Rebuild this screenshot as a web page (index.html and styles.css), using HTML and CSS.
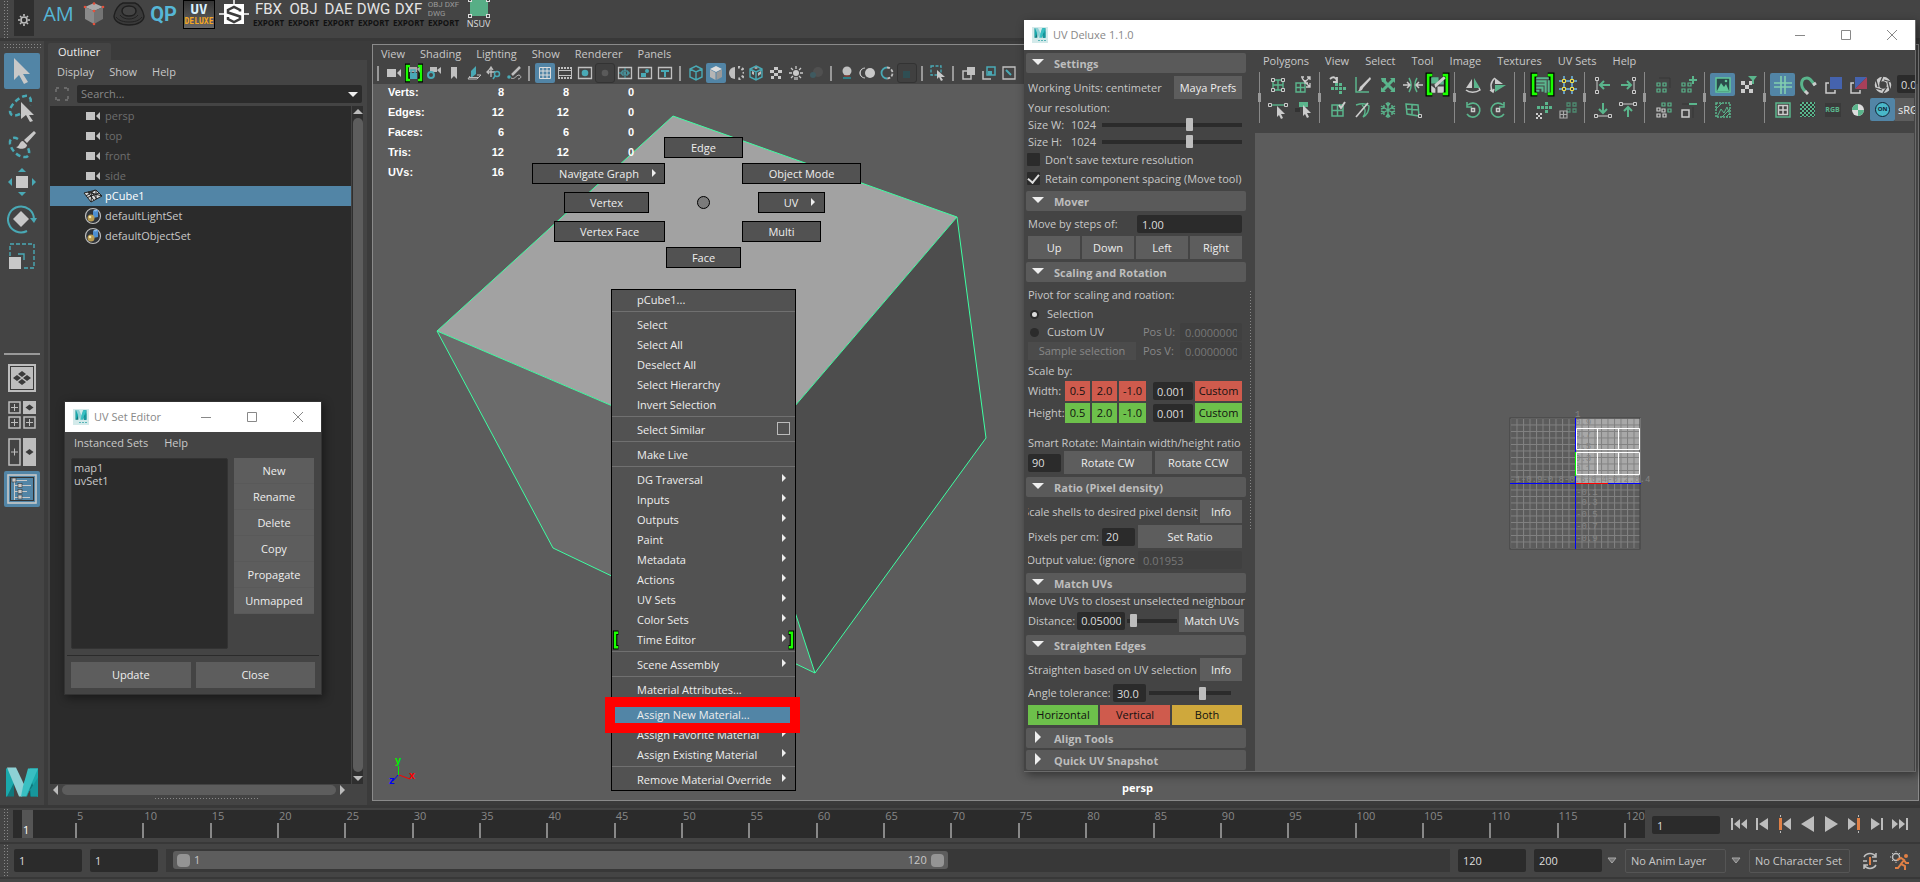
FILE: index.html
```html
<!DOCTYPE html>
<html lang="en">
<head>
<meta charset="utf-8">
<title>Maya - UV Deluxe</title>
<link rel="stylesheet" href="styles.css">
</head>
<body>
<svg class="defs" aria-hidden="true">
  <symbol id="camera" viewBox="0 0 16 12"><path fill="#c4c4c4" d="M1 2h9v8H1zM11 6l4-4v8z"/></symbol>
  <symbol id="set" viewBox="0 0 18 18"><circle cx="9" cy="9" r="7.5" fill="#30343a" stroke="#bdbdbd" stroke-width="1.2"/><path fill="#4d8fd0" d="M9 4l5-1v7l-5 1z"/><path fill="#8cbcea" d="M9 4l2-1.500 3 .5-2 1.500z"/><circle cx="7" cy="11" r="3.500" fill="#b89b50"/><circle cx="6" cy="10" r="1.300" fill="#efe2b0"/></symbol>
  <symbol id="maya" viewBox="0 0 32 30"><path fill="#10777c" d="M0 1h8v28H0zM24 1h8v28h-8z"/><path fill="#1aa9ac" d="M0 1l8 0 0 14L1 29H0zM32 1h-8L16 20l4 9h1l5-14 5 14h1z"/><path fill="#8ed1d5" d="M1 0h9l10 21-4 8h-3z"/><path fill="#17979c" d="M20 29L32 10V29h-7l-1-9z"/><path fill="#39bfc2" d="M22 1h10L20 29h-5l2-10z"/></symbol>
  <symbol id="tri" viewBox="0 0 12 6"><path fill="#eee" d="M0 0h12L6 6z"/></symbol>
  <symbol id="brL" viewBox="0 0 7 22"><path fill="none" stroke="#000" stroke-width="5" d="M7 3H3v16h4"/><path fill="none" stroke="#1bff00" stroke-width="2.600" d="M6.500 3H3v16h3.500"/></symbol>
  <symbol id="cubeo" viewBox="0 0 16 16"><path fill="none" stroke="#49a9b5" stroke-width="1.400" d="M8 1l6 3v8l-6 3-6-3V4zM2 4l6 3 6-3M8 7v8"/></symbol>
  <symbol id="first" viewBox="0 0 18 14"><path fill="#bdbdbd" d="M1 1h2v12H1zM10 2v10L4 7zM17 2v10l-6-5z"/></symbol>
  <symbol id="stepb" viewBox="0 0 14 14"><path fill="#bdbdbd" d="M1 1h2v12H1zM13 1v12L4 7z"/></symbol>
  <symbol id="keyb" viewBox="0 0 14 18"><path fill="#e08046" d="M1 3h3v12H1z"/><path fill="#bdbdbd" d="M13 3v12L5 9zM2 0h1v2H2zM2 16h1v2H2z"/></symbol>
  <symbol id="play" viewBox="0 0 14 16"><path fill="#bdbdbd" d="M1 0l13 8-13 8z"/></symbol>
</svg>

<header class="shelf">
  <div class="grip grip-v"></div>
  <button class="gear" aria-label="Shelf settings"><svg width="12" height="12" viewBox="0 0 12 12"><circle cx="6" cy="6" r="3" fill="none" stroke="#c0c0c0" stroke-width="1.600"/><path stroke="#c0c0c0" stroke-width="1.600" d="M6 0v2M6 10v2M0 6h2M10 6h2M2 2l1.300 1.300M8.700 8.700L10 10M10 2L8.700 3.300M3.300 8.700L2 10"/></svg></button>
  <nav class="shelf-items">
    <button class="cy">AM</button>
    <button aria-label="Cube"><svg width="22" height="24" viewBox="0 0 22 24"><path fill="#aaa" d="M11 1l9 4-9 4-9-4z"/><path fill="#8a8a8a" d="M2 5l9 4v13l-9-5z"/><path fill="#747474" d="M20 5l-9 4v13l9-5z"/><g fill="#e5503a"><circle cx="11" cy="1.500" r="1.300"/><circle cx="2" cy="5" r="1.300"/><circle cx="20" cy="5" r="1.300"/><circle cx="11" cy="9" r="1.300"/><circle cx="11" cy="22" r="1.300"/></g></svg></button>
    <button aria-label="Torus"><svg width="32" height="24" viewBox="0 0 32 24"><path fill="#3a3a3a" stroke="#1f1f1f" stroke-width="1.400" d="M1 14C2 8 6 2 10 1h12c4 1 8 7 9 13 0 5-6 9-15 9S1 19 1 14z"/><path fill="#444" stroke="#1f1f1f" stroke-width="1.500" d="M9 9c0-3 3-5 7-5s7 2 7 5-3 5-7 5-7-2-7-5z"/><path fill="none" stroke="#222" d="M3 15c3 4 8 5 13 5s10-1 13-5M7 13c2 3 6 4 9 4s7-1 9-4"/></svg></button>
    <button class="cy qp">QP</button>
    <button class="deluxe"><b>UV</b><i>DELUXE</i></button>
    <button aria-label="Substance"><svg width="30" height="30" viewBox="0 0 30 30"><path stroke="#fff" stroke-width="1.500" d="M0 15h30M15 0v5"/><rect x="5" y="5" width="20" height="20" fill="#fff"/><path fill="none" stroke="#3d3d3d" stroke-width="2.500" d="M21 12.500V11l-6-3-6 3v2.500l12 4V20l-6 3-6-3v-2"/></svg></button>
    <button class="exp"><b>FBX</b><i>EXPORT</i></button>
    <button class="exp"><b>OBJ</b><i>EXPORT</i></button>
    <button class="exp"><b>DAE</b><i>EXPORT</i></button>
    <button class="exp"><b>DWG</b><i>EXPORT</i></button>
    <button class="exp"><b>DXF</b><i>EXPORT</i></button>
    <button class="exp multi"><b>OBJ DXF<br>DWG</b><i>EXPORT</i></button>
    <button class="nsuv"><svg width="22" height="19" viewBox="0 0 22 19"><rect x="2" y="0" width="18" height="16" fill="#57ae86"/><g fill="#444" stroke="#ddd"><rect x=".5" y="14.500" width="3" height="3"/><rect x="18.500" y="14.500" width="3" height="3"/><rect x=".5" y="-1.500" width="3" height="3"/><rect x="18.500" y="-1.500" width="3" height="3"/></g></svg><span>NSUV</span></button>
  </nav>
</header>

<main class="main">
  <aside class="toolbox">
    <div class="grip grip-h"></div>
    <button class="tool on" aria-label="Select"><svg width="20" height="28" viewBox="0 0 20 28"><path fill="#c8c8c8" d="M2 1l16 16h-7l5 8-4 2-5-9-5 5z"/></svg></button>
    <button class="tool" aria-label="Lasso"><svg width="28" height="30" viewBox="0 0 28 30"><path fill="none" stroke="#49a9b5" stroke-width="2.500" stroke-dasharray="5 3" d="M12 21C5 24 2 22 2 18 2 12 11 4 17 3c5-1 7 3 5 9"/><path fill="#c8c8c8" d="M13 9l13 13h-5l4 6-3 1-4-7-5 4z"/></svg></button>
    <button class="tool" aria-label="Paint select"><svg width="28" height="30" viewBox="0 0 28 30"><path fill="none" stroke="#49a9b5" stroke-width="2.500" stroke-dasharray="5 3" d="M10 9C5 6 1 9 2 14c2 8 10 14 16 13 4-1 4-6 1-11"/><path fill="#c8c8c8" d="M26 1l2 2-9 10-3-3zM15 11l4 4c0 4-7 5-11 2 4 0 3-6 7-6z"/></svg></button>
    <button class="tool" aria-label="Move"><svg width="28" height="28" viewBox="0 0 28 28"><rect x="8" y="8" width="12" height="12" fill="#c8c8c8"/><path fill="#49a9b5" d="M14 0l4 4h-8zM14 28l4-4h-8zM0 14l4-4v8zM28 14l-4-4v8z"/></svg></button>
    <button class="tool" aria-label="Rotate"><svg width="30" height="30" viewBox="0 0 30 30"><path fill="none" stroke="#49a9b5" stroke-width="2" d="M20 27A13 13 0 1 1 27 15"/><path fill="#49a9b5" d="M23 14h7l-3 5z"/><path fill="#c8c8c8" d="M14 7l8 8-8 8-8-8z"/></svg></button>
    <button class="tool" aria-label="Scale"><svg width="26" height="26" viewBox="0 0 26 26"><path fill="none" stroke="#49a9b5" stroke-width="1.400" stroke-dasharray="4 2" d="M1 13V1h24v24H13"/><path fill="none" stroke="#49a9b5" stroke-width="1.400" d="M9 11h6v6"/><rect y="14" width="12" height="12" fill="#c8c8c8"/></svg></button>
    <hr>
    <div class="layouts">
      <button aria-label="Single pane"><svg width="28" height="28" viewBox="0 0 28 28"><rect width="28" height="28" fill="#bdbdbd"/><rect x="2.500" y="2.500" width="23" height="23" fill="none" stroke="#3a3a3a"/><g fill="#3a3a3a"><path d="M14 7l4 3-4 3-4-3zM14 15l4 3-4 3-4-3zM9 11l4 3-4 3-4-3zM19 11l4 3-4 3-4-3z"/></g></svg></button>
      <button aria-label="Four panes"><svg width="28" height="28" viewBox="0 0 28 28"><g fill="none" stroke="#bdbdbd"><path stroke-width="1.500" d="M1 1h11v11H1zM1 16h11v11H1zM16 16h11v11H16z"/><path d="M3 6.500h7M6.500 3v7M3 21.500h7M6.500 18v7M18 21.500h7M21.500 18v7"/></g><rect x="15" width="13" height="13" fill="#bdbdbd"/><path fill="#3a3a3a" d="M21.500 3.500l4 3-4 3-4-3z"/></svg></button>
      <button aria-label="Two panes"><svg width="28" height="28" viewBox="0 0 28 28"><path fill="none" stroke="#bdbdbd" stroke-width="1.500" d="M1 1h11v26H1z"/><path stroke="#bdbdbd" d="M3 14h7M6.500 10.500v7"/><rect x="15" width="13" height="28" fill="#bdbdbd"/><path fill="#3a3a3a" d="M21.500 11l4 3-4 3-4-3z"/></svg></button>
    </div>
    <button class="tool on" aria-label="Outliner"><svg width="30" height="30" viewBox="0 0 30 30"><rect x="1" y="1" width="28" height="28" fill="none" stroke="#c8c8c8" stroke-width="1.600"/><rect x="3.500" y="3.500" width="23" height="23" fill="none" stroke="#333"/><path stroke="#c8c8c8" fill="none" d="M7.500 6v20M7 6.500h13M7 11.500h17M7 17.500h13M7 23.500h16"/><g fill="#c8c8c8" stroke="#333" stroke-width=".6"><rect x="5" y="4" width="4" height="4"/><rect x="11" y="9.500" width="4" height="4"/><rect x="11" y="15.500" width="4" height="4"/><rect x="11" y="21" width="4" height="4"/></g></svg></button>
    <svg class="logo" width="32" height="31"><use href="#maya"/></svg>
  </aside>

  <section class="outliner">
    <h2 class="tab">Outliner</h2>
    <div class="out-panel">
      <nav class="menubar out-menu"><a href="#">Display</a><a href="#">Show</a><a href="#">Help</a></nav>
      <div class="search-row">
        <svg width="16" height="16" viewBox="0 0 16 16"><path fill="none" stroke="#777" stroke-width="1.400" d="M2 6V2h4M10 2h4v4M14 10v4h-4M6 14H2v-4" stroke-dasharray="3 1"/></svg>
        <label class="search"><input type="text" placeholder="Search..." aria-label="Search"><svg width="10" height="5"><use href="#tri"/></svg></label>
      </div>
      <div class="tree-wrap">
        <ul class="tree">
          <li class="dim"><svg width="16" height="12"><use href="#camera"/></svg>persp</li>
          <li class="dim"><svg width="16" height="12"><use href="#camera"/></svg>top</li>
          <li class="dim"><svg width="16" height="12"><use href="#camera"/></svg>front</li>
          <li class="dim"><svg width="16" height="12"><use href="#camera"/></svg>side</li>
          <li class="sel"><svg width="20" height="14" viewBox="0 0 20 14"><path fill="#d8d8d8" stroke="#222" d="M1 4l12-3 6 6-11 6z"/><path fill="none" stroke="#222" d="M4.500 8.500L16 4M8 2.500l6 7.500M5 3l6 8.500M8 13l1-11M13 1v9M3 7l9-6M5 3l14 4"/></svg>pCube1</li>
          <li><svg width="18" height="18"><use href="#set"/></svg>defaultLightSet</li>
          <li><svg width="18" height="18"><use href="#set"/></svg>defaultObjectSet</li>
        </ul>
        <div class="vbar"><i class="au"></i><span></span><i class="ad"></i></div>
      </div>
      <div class="hbar"><i class="al"></i><span></span><i class="ar"></i></div>
      <div class="dots"></div>
    </div>
  </section>

  <section class="viewport">
    <svg class="scene" aria-label="Cube">
      <g transform="translate(-373 -45)">
        <path fill="#a2a2a2" d="M673 116L957 217 746 463 437 331z"/>
        <path fill="#6b6b6b" d="M437 331L746 463 815 673 553 548z"/>
        <path fill="#4d4d4d" d="M957 217L986 438 815 673 746 463z"/>
        <path fill="none" stroke="#3dffa2" d="M673 116L957 217 986 438 815 673 553 548 437 331zM437 331L746 463 957 217M746 463L815 673"/>
        <path fill="none" stroke="#00f000" d="M398.500 766v9"/><path fill="none" stroke="#f00" d="M399 775l11 4"/><path fill="none" stroke="#00f" d="M398 775l-5 6"/>
        <text x="395" y="764" fill="#00f000" class="axis">y</text><text x="409" y="779" fill="#f00" class="axis">x</text><text x="389" y="784" fill="#00f" class="axis">z</text>
      </g>
    </svg>
    <div class="vp-head">
      <nav class="menubar vp-menu"><a href="#">View</a><a href="#">Shading</a><a href="#">Lighting</a><a href="#">Show</a><a href="#">Renderer</a><a href="#">Panels</a></nav>
      <div class="vp-tools">
        <i class="s"></i>
        <button><svg width="16" height="12"><use href="#camera"/></svg></button>
        <button class="brk"><svg width="18" height="20" viewBox="0 0 18 20"><path fill="none" stroke="#000" stroke-width="5" d="M5 3H2v14h3M13 3h3v14h-3"/><path fill="#aaa" d="M4 4h8v5H4zM12 6l3-3v7z"/><path fill="none" stroke="#49a9b5" stroke-width="1.500" d="M6 10V7h4v3"/><rect x="5" y="10" width="7" height="6" fill="#49a9b5"/><path fill="none" stroke="#1bff00" stroke-width="2.500" d="M5 3H2v14h3M13 3h3v14h-3"/></svg></button>
        <button><svg width="16" height="14" viewBox="0 0 16 14"><path fill="#bdbdbd" d="M4 1h7v5H4zM11 4l4-3v7z"/><circle cx="5" cy="9" r="3" fill="none" stroke="#49a9b5" stroke-width="2"/></svg></button>
        <button><svg width="16" height="14" viewBox="0 0 16 14"><path fill="#c0c0c0" d="M5 1h6v12L8 10l-3 3z"/></svg></button>
        <button><svg width="16" height="14" viewBox="0 0 16 14"><path fill="#49a9b5" d="M5 5l5-5v8l-5 4z"/><path fill="none" stroke="#bdbdbd" d="M4 10l-2 3h9l4-4h-4M3 11.500h9"/></svg></button>
        <button><svg width="16" height="14" viewBox="0 0 16 14"><path fill="none" stroke="#bdbdbd" stroke-width="1.300" d="M1 6h8M5 2v9M3 4l2-3 2 3M3 4L1 6l2 2"/><circle cx="11" cy="8" r="2.500" fill="none" stroke="#49a9b5" stroke-width="1.500"/><path stroke="#49a9b5" stroke-width="1.500" d="M9 10l-2 3"/></svg></button>
        <button><svg width="16" height="14" viewBox="0 0 16 14"><path fill="none" stroke="#bdbdbd" stroke-width="2.500" d="M14 1L6 9"/><circle cx="3" cy="11" r="1.800" fill="#49a9b5"/><path fill="none" stroke="#bdbdbd" d="M5 12c4 2 5-3 8-3 3 1 2 4-1 4"/></svg></button>
        <i class="s"></i>
        <button class="act"><svg width="14" height="14" viewBox="0 0 14 14"><path fill="none" stroke="#ddd" d="M1.500 1.500h11v11h-11zM1 5h12M1 9h12M5 1v12M9 1v12"/></svg></button>
        <button><svg width="16" height="14" viewBox="0 0 16 14"><path fill="none" stroke="#c0c0c0" stroke-dasharray="2 1" stroke-width="2" d="M1 2h14M1 12h14"/><path fill="none" stroke="#c0c0c0" d="M1.500 1v12M14.500 1v12M1 4.500h14M1 9.500h14"/></svg></button>
        <button><svg width="16" height="14" viewBox="0 0 16 14"><path fill="none" stroke="#c0c0c0" stroke-width="1.300" d="M1.500 1.500h13v11h-13z"/><circle cx="8" cy="7" r="3.300" fill="#49a9b5"/></svg></button>
        <button class="dk"><svg width="16" height="14" viewBox="0 0 16 14"><circle cx="8" cy="7" r="3.300" fill="#5a5a5a"/></svg></button>
        <button><svg width="16" height="14" viewBox="0 0 16 14"><path fill="none" stroke="#c0c0c0" stroke-width="1.300" d="M1.500 1.500h13v11h-13z"/><path stroke="#49a9b5" d="M8 2v10M2 7h12" stroke-dasharray="3 1"/><path fill="none" stroke="#49a9b5" d="M5 5h6v4H5z"/></svg></button>
        <button><svg width="16" height="14" viewBox="0 0 16 14"><path fill="none" stroke="#c0c0c0" stroke-width="1.300" d="M1.500 1.500h13v11h-13z"/><circle cx="10" cy="5" r="2" fill="#49a9b5"/><path fill="#49a9b5" d="M4 7h5v4H4z"/></svg></button>
        <button><svg width="16" height="14" viewBox="0 0 16 14"><path fill="none" stroke="#c0c0c0" stroke-width="1.300" d="M1.500 1.500h13v11h-13z"/><path stroke="#49a9b5" stroke-width="2" d="M4 5h8M8 4v7"/></svg></button>
        <i class="s"></i>
        <button><svg width="16" height="16"><use href="#cubeo"/></svg></button>
        <button class="act"><svg width="16" height="16" viewBox="0 0 16 16"><path fill="#ddd" d="M8 1l6 3-6 3-6-3z"/><path fill="#b5b5b5" d="M2 4.500l5.500 3V15L2 12z"/><path fill="#999" d="M14 4.500l-5.500 3V15l5.500-3z"/></svg></button>
        <button><svg width="16" height="14" viewBox="0 0 16 14"><path fill="#c0c0c0" d="M7 1v12a6 6 0 0 1 0-12z"/><path fill="none" stroke="#c0c0c0" stroke-dasharray="2 2" stroke-width="3" d="M10 1a6 6 0 0 1 0 12"/></svg></button>
        <button><svg width="16" height="16"><use href="#cubeo"/><path fill="#bdbdbd" d="M4 6l2 1v3l-2-1zM10 8l3-2v3l-3 2zM6 3l2 1 2-1-2-1z"/></svg></button>
        <button><svg width="16" height="14" viewBox="0 0 16 14"><path fill="#c8c8c8" d="M6 1h4v3H6zM2 4h4v3H2zM10 4h4v3h-4zM6 7h4v3H6zM3 10h3v3H3zM10 10h3v3h-3z"/></svg></button>
        <button><svg width="16" height="14" viewBox="0 0 16 14"><circle cx="8" cy="7" r="3" fill="#c8c8c8"/><path stroke="#c8c8c8" stroke-width="1.300" d="M8 0v3M1 7h3M12 7h3M3 2l2 2M13 2l-2 2M3 12l2-2M13 12l-2-2M7 11v3M9 11v3"/></svg></button>
        <button><svg width="16" height="14" viewBox="0 0 16 14"><circle cx="10" cy="6" r="5" fill="#505050"/><circle cx="5" cy="9" r="3" fill="#3f5a60"/></svg></button>
        <i class="s"></i>
        <button><svg width="16" height="14" viewBox="0 0 16 14"><circle cx="8" cy="5" r="4.500" fill="#c0c0c0"/><path stroke="#a03c30" d="M5 10h6"/><path stroke="#2f7d86" stroke-width="2" d="M4 12h8"/></svg></button>
        <button><svg width="18" height="14" viewBox="0 0 18 14"><circle cx="12" cy="7" r="5" fill="#c8c8c8"/><path fill="none" stroke="#c8c8c8" d="M7 2a5 5 0 0 0 0 10M4 3a5 5 0 0 0 0 8"/></svg></button>
        <button><svg width="16" height="14" viewBox="0 0 16 14"><path fill="none" stroke="#49a9b5" stroke-width="1.800" d="M8 1.500a5.500 5.500 0 0 0 0 11"/><path fill="none" stroke="#bdbdbd" stroke-width="1.800" stroke-dasharray="3 1.500" d="M8 1.500a5.500 5.500 0 0 1 0 11"/></svg></button>
        <button class="dk"><svg width="16" height="14" viewBox="0 0 16 14"><path fill="#2f4e53" d="M4 5h7v7H4z"/></svg></button>
        <i class="s"></i>
        <button><svg width="16" height="16" viewBox="0 0 16 16"><path fill="none" stroke="#49a9b5" stroke-width="1.300" stroke-dasharray="3 1.500" d="M1 1h10v9H1z"/><path fill="#c8c8c8" d="M7 5l8 7h-4l2 3-2 1-2-4-2 2z"/></svg></button>
        <i class="s"></i>
        <button><svg width="14" height="14" viewBox="0 0 14 14"><path fill="#c0c0c0" d="M5 1h8v8H5z"/><path fill="#444" stroke="#c0c0c0" stroke-width="1.500" d="M1 5h8v8H1z"/><path fill="#c0c0c0" d="M5 5h4v4H5z"/></svg></button>
        <button><svg width="14" height="14" viewBox="0 0 14 14"><path fill="none" stroke="#49a9b5" stroke-width="1.500" d="M5 1h8v8H5z"/><path fill="none" stroke="#c0c0c0" stroke-width="1.500" d="M1 5v8h8"/><path fill="#49a9b5" d="M6 5h4v4H6z"/></svg></button>
        <button><svg width="14" height="14" viewBox="0 0 14 14"><path fill="none" stroke="#c0c0c0" stroke-width="1.300" d="M1 1h12v12H1z"/><path stroke="#49a9b5" stroke-width="2" d="M4 4l5 5"/></svg></button>
      </div>
    </div>
    <table class="hud">
      <tr><th>Verts:</th><td>8</td><td>8</td><td>0</td></tr>
      <tr><th>Edges:</th><td>12</td><td>12</td><td>0</td></tr>
      <tr><th>Faces:</th><td>6</td><td>6</td><td>0</td></tr>
      <tr><th>Tris:</th><td>12</td><td>12</td><td>0</td></tr>
      <tr><th>UVs:</th><td>16</td><td></td><td></td></tr>
    </table>
    <div class="cam-name">persp</div>
  </section>
</main>

<footer class="foot">
  <div class="timeline">
    <div class="grip grip-v"></div>
    <div class="track">
      <span class="now">1</span>
      <div class="tick">5</div><div class="tick">10</div><div class="tick">15</div><div class="tick">20</div><div class="tick">25</div><div class="tick">30</div><div class="tick">35</div><div class="tick">40</div><div class="tick">45</div><div class="tick">50</div><div class="tick">55</div><div class="tick">60</div><div class="tick">65</div><div class="tick">70</div><div class="tick">75</div><div class="tick">80</div><div class="tick">85</div><div class="tick">90</div><div class="tick">95</div><div class="tick">100</div><div class="tick">105</div><div class="tick">110</div><div class="tick">115</div><div class="tick last">120</div>
    </div>
    <input class="field frame" value="1" aria-label="Current frame">
    <div class="playback">
      <button aria-label="Go to start"><svg width="18" height="14"><use href="#first"/></svg></button>
      <button aria-label="Step back frame"><svg width="14" height="14"><use href="#stepb"/></svg></button>
      <button aria-label="Step back key"><svg width="14" height="18"><use href="#keyb"/></svg></button>
      <button aria-label="Play backwards" class="flip"><svg width="14" height="16"><use href="#play"/></svg></button>
      <button aria-label="Play forwards"><svg width="14" height="16"><use href="#play"/></svg></button>
      <button aria-label="Step forward key" class="flip"><svg width="14" height="18"><use href="#keyb"/></svg></button>
      <button aria-label="Step forward frame" class="flip"><svg width="14" height="14"><use href="#stepb"/></svg></button>
      <button aria-label="Go to end" class="flip"><svg width="18" height="14"><use href="#first"/></svg></button>
    </div>
  </div>
  <div class="range">
    <div class="grip grip-v"></div>
    <input class="field" value="1" aria-label="Animation start">
    <input class="field" value="1" aria-label="Playback start">
    <div class="range-track"><div class="range-bar"><i></i><span>1</span><span class="end">120</span><i></i></div></div>
    <input class="field" value="120" aria-label="Playback end">
    <input class="field" value="200" aria-label="Animation end">
    <svg class="dd" width="10" height="7" viewBox="0 0 10 7"><path fill="#777" stroke="#a8a8a8" d="M1 1h8L5 6z"/></svg>
    <select class="pick" aria-label="Animation layer"><option>No Anim Layer</option></select>
    <svg class="dd" width="10" height="7" viewBox="0 0 10 7"><path fill="#777" stroke="#a8a8a8" d="M1 1h8L5 6z"/></svg>
    <select class="pick" aria-label="Character set"><option>No Character Set</option></select>
    <button class="fi" aria-label="Auto key"><svg width="18" height="18" viewBox="0 0 18 18"><path fill="none" stroke="#c0c0c0" stroke-width="1.500" d="M3 5a7 7 0 0 1 12 0M15 13a7 7 0 0 1-12 0M2 9h4M12 9h4M15 1v4h-4M3 17v-4h4"/><path stroke="#e08046" stroke-width="2" d="M9 5v8"/></svg></button>
    <button class="fi" aria-label="Preferences"><svg width="20" height="20" viewBox="0 0 20 20"><circle cx="6" cy="6" r="3.500" fill="none" stroke="#c0c0c0" stroke-width="1.500"/><path stroke="#c0c0c0" d="M6 1v-1M6 11v1M1 6H0M2 2l1 1M10 2L9 3M2 10l1-1"/><circle cx="16" cy="5" r="2" fill="#e08046"/><path fill="none" stroke="#e08046" stroke-width="2" d="M7 9l4-2 3 2-3 4 4 2 0 4M11 13l-3 4H5M14 9l2 3h3"/></svg></button>
  </div>
  <div class="strip"></div>
</footer>

<!-- Marking menu -->
<div class="marking">
  <button class="mk edge">Edge</button>
  <button class="mk nav">Navigate Graph<i></i></button>
  <button class="mk obj">Object Mode</button>
  <button class="mk vert">Vertex</button>
  <button class="mk uvm">UV<i></i></button>
  <button class="mk vface">Vertex Face</button>
  <button class="mk mult">Multi</button>
  <button class="mk face">Face</button>
  <span class="hub"></span>
</div>

<!-- Context menu -->
<menu class="ctx">
  <li>pCube1...</li>
  <li class="sep">Select</li><li>Select All</li><li>Deselect All</li><li>Select Hierarchy</li><li>Invert Selection</li>
  <li class="sep box">Select Similar</li>
  <li class="sep">Make Live</li>
  <li class="sep sub">DG Traversal</li><li class="sub">Inputs</li><li class="sub">Outputs</li><li class="sub">Paint</li><li class="sub">Metadata</li><li class="sub">Actions</li><li class="sub">UV Sets</li><li class="sub">Color Sets</li>
  <li class="sub time">Time Editor<svg class="bl" width="7" height="20" viewBox="0 0 7 22"><use href="#brL"/></svg><svg class="br" width="7" height="20" viewBox="0 0 7 22"><use href="#brL"/></svg></li>
  <li class="sep sub">Scene Assembly</li>
  <li class="sep">Material Attributes...</li>
  <li class="sep hot">Assign New Material...</li><li class="sub">Assign Favorite Material</li><li class="sub">Assign Existing Material</li>
  <li class="sep sub">Remove Material Override</li>
</menu>
<div class="callout"></div>

<!-- UV Set Editor -->
<section class="win setwin">
  <header class="title"><svg width="16" height="16" viewBox="0 0 16 16"><rect width="16" height="16" fill="#d3eaea"/><svg x="2" y="1" width="12" height="10"><use href="#maya"/></svg><path stroke="#58b5b8" stroke-dasharray="2 1" d="M6 13.500h8"/></svg><h2>UV Set Editor</h2>
    <button aria-label="Minimize"><svg width="12" height="12"><path stroke="#888" d="M1 6.500h10"/></svg></button><button aria-label="Maximize"><svg width="12" height="12"><path fill="none" stroke="#888" d="M1.500 1.500h9v9h-9z"/></svg></button><button aria-label="Close window"><svg width="12" height="12"><path stroke="#888" d="M1 1l10 10M11 1L1 11"/></svg></button></header>
  <nav class="menubar set-menu"><a href="#">Instanced Sets</a><a href="#">Help</a></nav>
  <div class="set-body">
    <ul class="set-list"><li>map1</li><li>uvSet1</li></ul>
    <div class="set-btns"><button class="btn">New</button><button class="btn">Rename</button><button class="btn">Delete</button><button class="btn">Copy</button><button class="btn">Propagate</button><button class="btn">Unmapped</button></div>
  </div>
  <div class="set-foot"><button class="btn">Update</button><button class="btn">Close</button></div>
</section>

<!-- UV Deluxe -->
<section class="win deluxe-win">
  <header class="title"><svg width="16" height="16" viewBox="0 0 16 16"><rect width="16" height="16" fill="#d3eaea"/><svg x="2" y="1" width="12" height="10"><use href="#maya"/></svg><path stroke="#58b5b8" stroke-dasharray="2 1" d="M6 13.500h8"/></svg><h2>UV Deluxe 1.1.0</h2>
    <button aria-label="Minimize"><svg width="12" height="12"><path stroke="#888" d="M1 6.500h10"/></svg></button><button aria-label="Maximize"><svg width="12" height="12"><path fill="none" stroke="#888" d="M1.500 1.500h9v9h-9z"/></svg></button><button aria-label="Close window"><svg width="12" height="12"><path stroke="#888" d="M1 1l10 10M11 1L1 11"/></svg></button></header>
  <div class="dx">
    <div class="dx-side">
      <button class="sec"><svg width="12" height="6"><use href="#tri"/></svg>Settings</button>
      <div class="body">
        <div class="row r23"><span class="grow">Working Units: centimeter</span><button class="btn w68">Maya Prefs</button></div>
        <div class="row r17">Your resolution:</div>
        <div class="row r17"><label class="w43" for="sw">Size W:</label><span class="w31">1024</span><input id="sw" type="range" class="grow" value="63"></div>
        <div class="row r17"><label class="w43" for="sh">Size H:</label><span class="w31">1024</span><input id="sh" type="range" class="grow" value="63"></div>
        <label class="row r19 ck"><input type="checkbox">Don't save texture resolution</label>
        <label class="row r19 ck"><input type="checkbox" checked>Retain component spacing (Move tool)</label>
      </div>
      <button class="sec"><svg width="12" height="6"><use href="#tri"/></svg>Mover</button>
      <div class="body">
        <div class="row r20"><label class="grow" for="mv">Move by steps of:</label><input id="mv" class="field w105" value="1.00"></div>
        <div class="row r23 g2 mt2"><button class="btn eq">Up</button><button class="btn eq">Down</button><button class="btn eq">Left</button><button class="btn eq">Right</button></div>
      </div>
      <button class="sec"><svg width="12" height="6"><use href="#tri"/></svg>Scaling and Rotation</button>
      <div class="body">
        <div class="row r20">Pivot for scaling and roation:</div>
        <label class="row r18 rd"><input type="radio" name="p" checked>Selection</label>
        <div class="row r18"><label class="grow rd"><input type="radio" name="p">Custom UV</label><label class="off w37" for="pu">Pos U:</label><input id="pu" class="field gone w62" value="0.0000000" disabled></div>
        <div class="row r20"><button class="btn gone w108" disabled>Sample selection</button><span class="grow"></span><label class="off w37" for="pv">Pos V:</label><input id="pv" class="field gone w62" value="0.0000000" disabled></div>
        <div class="row r20">Scale by:</div>
        <div class="row r20 g2"><label class="w35" for="cw">Width:</label><button class="btn red w25">0.5</button><button class="btn red w25">2.0</button><button class="btn red w27">-1.0</button><span class="grow"></span><input id="cw" class="field tight w40" value="0.001"><button class="btn red w47">Custom</button></div>
        <div class="row r20 g2 mt2"><label class="w35" for="ch">Height:</label><button class="btn green w25">0.5</button><button class="btn green w25">2.0</button><button class="btn green w27">-1.0</button><span class="grow"></span><input id="ch" class="field tight w40" value="0.001"><button class="btn green w47">Custom</button></div>
        <div class="row r17 smart">Smart Rotate: Maintain width/height ratio</div>
        <div class="row r23 g3"><input class="field tight w33" value="90" aria-label="Rotation angle"><button class="btn eq">Rotate CW</button><button class="btn eq">Rotate CCW</button></div>
      </div>
      <button class="sec"><svg width="12" height="6"><use href="#tri"/></svg>Ratio (Pixel density)</button>
      <div class="body">
        <div class="row r23 g2"><span class="clip mid"><span>Scale shells to desired pixel density</span></span><button class="btn w42">Info</button></div>
        <div class="row r23 g3 mt2"><label class="grow" for="pc">Pixels per cm:</label><input id="pc" class="field tight w33" value="20"><button class="btn w104">Set Ratio</button></div>
        <div class="row r20 g3 mt2"><label class="clip cl" for="ov"><span>Output value: (ignore</span></label><input id="ov" class="field gone w104" value="0.01953" disabled></div>
      </div>
      <button class="sec"><svg width="12" height="6"><use href="#tri"/></svg>Match UVs</button>
      <div class="body flat">
        <div class="row r17 over">Move UVs to closest unselected neighbour</div>
        <div class="row r23 g2"><label class="grow" for="ds">Distance:</label><input id="ds" class="field tight w48" value="0.05000"><input type="range" class="w50" value="7" aria-label="Distance slider"><button class="btn w65">Match UVs</button></div>
      </div>
      <button class="sec"><svg width="12" height="6"><use href="#tri"/></svg>Straighten Edges</button>
      <div class="body">
        <div class="row r23"><span class="clip">Straighten based on UV selection</span><button class="btn w42">Info</button></div>
        <div class="row r20 g3 mt2"><label class="w82 clip" for="at">Angle tolerance:</label><input id="at" class="field tight w33" value="30.0"><input type="range" class="w82" value="67" aria-label="Angle slider"></div>
        <div class="row r20 g2 mt2"><button class="btn green eq">Horizontal</button><button class="btn red eq">Vertical</button><button class="btn gold eq">Both</button></div>
      </div>
      <button class="sec shut"><svg width="12" height="6"><use href="#tri"/></svg>Align Tools</button>
      <button class="sec shut last"><svg width="12" height="6"><use href="#tri"/></svg>Quick UV Snapshot</button>
    </div>
    <div class="split"></div>
    <div class="dx-main">
      <nav class="menubar uv-menu"><a href="#">Polygons</a><a href="#">View</a><a href="#">Select</a><a href="#">Tool</a><a href="#">Image</a><a href="#">Textures</a><a href="#">UV Sets</a><a href="#">Help</a></nav>
      <div class="uv-tools">
        <i class="s"></i>
        <div class="grp">
          <button><svg viewBox="0 0 20 20"><g fill="none" stroke="#5ab58c" stroke-width="1.400"><path d="M5 5h10v10H5zM10 5v10M5 10h10"/></g><g fill="#444" stroke="#ccc"><path d="M3.500 3.500h3v3h-3zM13.500 3.500h3v3h-3zM3.500 13.500h3v3h-3zM13.500 13.500h3v3h-3z"/></g></svg></button>
          <button><svg viewBox="0 0 20 20"><path fill="none" stroke="#5ab58c" stroke-width="1.400" d="M3 8h9v9H3zM7.500 8v9M3 12.500h9"/><path fill="none" stroke="#ccc" stroke-width="1.300" d="M11 2h-3M9 3l3 4M17 2l-5 5M14 2h3v3M17 8v4h-4M17 12l-4-4M12 5v3h3"/></svg></button>
          <button><svg viewBox="0 0 20 20"><path stroke="#5ab58c" stroke-width="1.400" d="M3 5h14"/><path fill="#444" stroke="#ccc" d="M.500 3.500h3v3h-3zM16.500 3.500h3v3h-3z"/><path fill="#ccc" d="M9 6l8 8h-4l2 4-2 1-2-4-2 2z"/></svg></button>
          <button><svg viewBox="0 0 20 20"><path fill="#5ab58c" d="M6 2h9v5H6z"/><path fill="#333" d="M2 8h5v4H2z"/><path fill="#ccc" d="M10 5l8 8h-4l2 4-2 1-2-4-2 2z"/></svg></button>
        </div>
        <i class="s"></i>
        <div class="grp c5">
          <button><svg viewBox="0 0 20 20"><path fill="#5ab58c" d="M7 8h3v3H7zM11 8h3v3h-3zM3 12h3v3H3zM7 12h3v3H7zM11 12h3v3h-3zM15 12h3v3h-3zM11 16h3v3h-3z"/><path fill="none" stroke="#ccc" stroke-width="1.800" d="M2 4c3-3 6-2 7 2M9 2v5H5"/></svg></button>
          <button><svg viewBox="0 0 20 20"><path fill="none" stroke="#5ab58c" stroke-width="1.500" d="M3 2v15h13"/><path fill="#ccc" d="M17 2l1 2-8 9-2-2zM8 11l2 2c-1 3-3 3-5 3 2-1 1-4 3-5z"/></svg></button>
          <button><svg viewBox="0 0 20 20"><path stroke="#5ab58c" stroke-width="3" d="M5 5l10 10M15 5L5 15"/><path fill="#5ab58c" d="M3 3h5v4H4zM12 3h5v5zM3 12l5 5H3zM17 12v5h-5z"/></svg></button>
          <button><svg viewBox="0 0 20 20"><path fill="none" stroke="#5ab58c" stroke-width="1.500" d="M6 3c3 5 3 9 0 14M14 3c-3 5-3 9 0 14"/><path fill="none" stroke="#ccc" stroke-width="1.500" d="M0 10h6M4 7l3 3-3 3M20 10h-6M16 7l-3 3 3 3"/></svg></button>
          <button class="big"><svg viewBox="0 0 24 24"><path fill="none" stroke="#000" stroke-width="5" d="M7 3H3v18h4M17 3h4v18h-4"/><path fill="#5ab58c" d="M6 5h7v6H6zM14 11l4-3v4h-4z"/><path fill="#ccc" d="M18 4L9 12l1 3 10-9zM6 13l4 3v4H6zM12 14h6v6h-6z"/><path fill="none" stroke="#1bff00" stroke-width="2.600" d="M7 3H3v18h4M17 3h4v18h-4"/></svg></button>
          <button><svg viewBox="0 0 20 20"><path fill="none" stroke="#5ab58c" stroke-width="1.500" d="M4 5h11v11H4zM9.500 5v11M4 10.500h11"/><path fill="none" stroke="#ccc" stroke-width="2" d="M11 5l2 3 4-6"/></svg></button>
          <button><svg viewBox="0 0 20 20"><path fill="none" stroke="#5ab58c" stroke-width="1.400" d="M3 5c6-2 11-1 13 1 0 5-2 9-6 11M9 5c4 3 4 8 1 12"/><path fill="none" stroke="#ccc" stroke-width="1.700" d="M15 3L3 17"/></svg></button>
          <button><svg viewBox="0 0 20 20"><path fill="none" stroke="#5ab58c" stroke-width="1.400" d="M10 2v16M3 6l14 8M17 6L3 14M8 3l2 3 2-3M8 17l2-3 2 3M3 9l3-1V5M17 9l-3-1V5M3 11l3 1v3M17 11l-3 1v3"/></svg></button>
          <button><svg viewBox="0 0 20 20"><path fill="none" stroke="#5ab58c" stroke-width="1.500" d="M3 4l12 1 1 11-12-2zM9 4v10M3 9l13 1"/><path fill="#444" stroke="#ccc" d="M15.500 14.500h3v3h-3z"/></svg></button>
        </div>
        <i class="s"></i>
        <div class="grp">
          <button><svg viewBox="0 0 20 20"><path fill="#ccc" d="M9 4v9H3z"/><path fill="#5ab58c" d="M11 3v10h6z"/><path fill="none" stroke="#ccc" stroke-width="1.500" d="M3 15c3 3 10 3 14 0l-1-2"/></svg></button>
          <button><svg viewBox="0 0 20 20"><path fill="#ccc" d="M7 3l8 6H7z"/><path fill="#5ab58c" d="M7 10h11L7 17z"/><path fill="none" stroke="#ccc" stroke-width="1.500" d="M7 3C2 7 2 13 5 17M2 15l3 2 1-3"/></svg></button>
          <button><svg viewBox="0 0 20 20"><path fill="none" stroke="#5ab58c" stroke-width="1.600" d="M5 5a7 7 0 1 1-1 9M4 2v5h5"/><path fill="none" stroke="#ccc" stroke-width="1.500" d="M8.500 8.500h3v3h-3z"/></svg></button>
          <button><svg viewBox="0 0 20 20"><path fill="none" stroke="#5ab58c" stroke-width="1.600" d="M15 5a7 7 0 1 0 1 9M16 2v5h-5"/><path fill="none" stroke="#ccc" stroke-width="1.500" d="M8.500 8.500h3v3h-3z"/></svg></button>
        </div>
        <i class="s plain"></i><i class="s"></i>
        <div class="grp">
          <button class="big"><svg viewBox="0 0 24 24"><path fill="none" stroke="#000" stroke-width="5" d="M7 3H3v18h4M17 3h4v18h-4"/><path fill="none" stroke="#5ab58c" stroke-width="2" d="M6 6h12M6 9h9v3H6M18 8v12M15 12v8M6 15h6v4M6 18h3"/><path fill="none" stroke="#1bff00" stroke-width="2.600" d="M7 3H3v18h4M17 3h4v18h-4"/></svg></button>
          <button><svg viewBox="0 0 20 20"><path fill="none" stroke="#6fb8e8" stroke-width="1.500" d="M6 1v18M14 1v18M1 6h18M1 14h18"/><path fill="#444" stroke="#f2e34a" d="M4.500 4.500h3v3h-3zM12.500 4.500h3v3h-3zM4.500 12.500h3v3h-3zM12.500 12.500h3v3h-3z"/></svg></button>
          <button><svg viewBox="0 0 20 20"><path fill="#5ab58c" d="M12 2h3v3h-3zM4 6h3v3H4zM8 6h3v3H8zM12 6h3v3h-3zM16 6h3v3h-3zM12 10h3v3h-3z"/><path fill="#ccc" d="M3 13h2v2H3zM7 13h2v2H7zM5 15h2v2H5zM3 17h2v2H3zM7 17h2v2H7z"/></svg></button>
          <button><svg viewBox="0 0 20 20"><path fill="none" stroke="#4d8a70" stroke-width="1.300" d="M9 3h3v3H9zM15 3h3v3h-3zM15 9h3v3h-3zM9 9h3v3H9z"/><path fill="none" stroke="#aaa" stroke-width="1.200" d="M2 11h7v7H2zM5.500 11v7M2 14.500h7"/></svg></button>
        </div>
        <i class="s"></i>
        <div class="grp">
          <button><svg viewBox="0 0 20 20"><path stroke="#5ab58c" stroke-width="2" d="M8 10h9M11 6l-4 4 4 4" fill="none"/><path fill="none" stroke="#ccc" d="M2.500 2.500h3v3h-3zM4 6v9M2.500 15.500h3v3h-3z"/></svg></button>
          <button><svg viewBox="0 0 20 20"><path stroke="#5ab58c" stroke-width="2" d="M3 10h9M9 6l4 4-4 4" fill="none"/><path fill="none" stroke="#ccc" d="M14.500 2.500h3v3h-3zM16 6v9M14.500 15.500h3v3h-3z"/></svg></button>
          <button><svg viewBox="0 0 20 20"><path stroke="#5ab58c" stroke-width="2" d="M10 3v9M6 9l4 4 4-4" fill="none"/><path fill="none" stroke="#ccc" d="M1.500 14.500h3v3h-3zM5 16h10M15.500 14.500h3v3h-3z"/></svg></button>
          <button><svg viewBox="0 0 20 20"><path stroke="#5ab58c" stroke-width="2" d="M10 17V8M6 11l4-4 4 4" fill="none"/><path fill="none" stroke="#ccc" d="M1.500 2.500h3v3h-3zM5 4h10M15.500 2.500h3v3h-3z"/></svg></button>
        </div>
        <i class="s"></i>
        <div class="grp">
          <button><svg viewBox="0 0 20 20"><path fill="none" stroke="#363636" d="M6 3h11v10"/><path fill="none" stroke="#5ab58c" stroke-width="1.200" d="M4 8h3v3H4zM10 8h3v3h-3zM4 14h3v3H4zM10 14h3v3h-3z"/></svg></button>
          <button><svg viewBox="0 0 20 20"><path fill="none" stroke="#5ab58c" stroke-width="1.200" d="M4 8h3v3H4zM10 8h3v3h-3zM4 14h3v3H4zM10 14h3v3h-3z"/><path stroke="#5ab58c" stroke-width="2" d="M11 5h8M15 1v8"/></svg></button>
          <button><svg viewBox="0 0 20 20"><path fill="none" stroke="#5ab58c" stroke-width="1.200" d="M9 3h3v3H9zM15 3h3v3h-3zM15 9h3v3h-3z"/><path fill="none" stroke="#ccc" stroke-width="1.200" d="M4 8h3v3H4zM9 9h3v3H9zM4 14h3v3H4zM10 14h3v3h-3z"/></svg></button>
          <button><svg viewBox="0 0 20 20"><path fill="none" stroke="#363636" d="M4 4h9M15 7v11"/><path fill="none" stroke="#ccc" stroke-width="1.500" d="M4 10h7v7H4z"/><path stroke="#5ab58c" stroke-width="2" d="M11 4h8"/></svg></button>
        </div>
        <i class="s"></i>
        <div class="grp">
          <button class="act"><svg viewBox="0 0 20 20"><path fill="#2b4a4a" stroke="#62c79a" stroke-width="1.500" d="M3 3h14v14H3z"/><path fill="#62c79a" d="M4 16l4-8 3 4 2-3 3 7z"/><circle cx="13" cy="6" r="1.300" fill="#62c79a"/></svg></button>
          <button><svg viewBox="0 0 20 20"><path fill="#ccc" d="M3 6h4v4H3zM11 6h3v4h-3zM7 10h4v4H7zM3 14h4v4H3zM11 14h4v4h-4z"/><path fill="#5ab58c" d="M10 1h9l-3 4v4h-2V5z"/></svg></button>
          <button><svg viewBox="0 0 20 20"><path fill="none" stroke="#5ab58c" stroke-dasharray="2 1" stroke-width="1.500" d="M3 3h14v14H3z"/><path stroke="#5ab58c" fill="none" d="M3 9l6-6M4 17l4-8 3 4 3-6 3 8M9 17l8-8M13 17l4-4"/></svg></button>
          <span></span>
        </div>
        <i class="s"></i>
        <div class="grp c5">
          <button class="act"><svg viewBox="0 0 20 20"><path fill="none" stroke="#83cfb0" stroke-width="1.600" d="M8 1v18M12 1v18M1 8h18M1 12h18"/></svg></button>
          <button><svg viewBox="0 0 20 20"><path fill="none" stroke="#5ab58c" stroke-width="3" d="M8 17C1 11 3 3 9 3c4 0 4 3 8 7"/><path stroke="#ccc" stroke-width="3" d="M7 16l3 3M15 10l3-2"/></svg></button>
          <button><svg viewBox="0 0 20 20"><path fill="#4563ae" d="M7 2h12v12H7z"/><path fill="none" stroke="#ccc" stroke-width="1.500" d="M6 8H3v10h9v-3"/></svg></button>
          <button><svg viewBox="0 0 20 20"><path fill="#4563ae" d="M7 2h12L7 14z"/><path fill="#a8405a" d="M19 2v12H7z"/><path fill="none" stroke="#ccc" stroke-width="1.500" d="M6 8H3v10h9v-3"/></svg></button>
          <button><svg viewBox="0 0 20 20"><circle cx="10" cy="10" r="6" fill="none" stroke="#ccc" stroke-width="4.500"/><path stroke="#444" stroke-width="1.300" d="M10 1l-3 7M18 7l-7-2M17 15l-2-8M10 18l4-6M2 13l7 2M3 5l2 7"/></svg></button>
          <button><svg viewBox="0 0 20 20"><path fill="none" stroke="#5ab58c" stroke-width="1.500" d="M3 3h14v14H3z"/><path fill="none" stroke="#ccc" stroke-width="1.500" d="M5.500 5.500h9v9h-9zM10 5v10M5 10h10"/></svg></button>
          <button class="check"><span></span></button>
          <button><span class="rgb">RGB</span></button>
          <button><svg viewBox="0 0 20 20"><circle cx="10" cy="10" r="6" fill="#ddd"/><path fill="#5ab58c" d="M10 4v6H4a6 6 0 0 1 6-6zM10 16v-6h6a6 6 0 0 1-6 6z"/></svg></button>
          <button class="act onb"><span>ON</span></button>
        </div>
        <div class="cutoff"><input class="field tight" value="0.00" aria-label="Exposure"><button class="btn">sRGB gamma</button></div>
      </div>
      <div class="uv-canvas">
        <svg class="uv" width="150" height="150" viewBox="0 0 150 150">
          <defs><pattern id="g" width="6.500" height="6.500" patternUnits="userSpaceOnUse" x="10" y="17"><path d="M0 .5h6.500M.5 0v6.500" stroke="#818181" fill="none"/></pattern></defs>
          <rect x="75" y="17" width="66" height="66" fill="#a8a8a8"/>
          <rect x="10" y="17" width="130" height="131" fill="url(#g)" stroke="#404040"/>
          <g class="tiny"><text x="75" y="16">1</text><text x="75" y="24">0.9</text><text x="75" y="36">0.7</text><text x="75" y="48">0.5</text><text x="75" y="60">0.3</text><text x="75" y="70">0.1</text><text x="10" y="81">-1-0.9-0.8-0.6-0.4-0.2.0.4.8</text><text x="76" y="94">-0.1</text><text x="76" y="104">-0.3</text><text x="76" y="116">-0.5</text><text x="76" y="128">-0.7</text><text x="76" y="140">-0.9</text></g>
          <path stroke="#0000ff" d="M10 82.500h131M75.500 17v131"/><path stroke="#0f0" d="M75.500 51v24"/><path stroke="#f00" d="M76 82.500h32"/>
          <path fill="none" stroke="#fff" d="M76.500 27.500h63v21h-63zM97.500 27v21M118.500 27v21M76.500 51.500h63v22h-63zM97.500 51v22M118.500 51v22"/>
        </svg>
      </div>
    </div>
  </div>
</section>
</body>
</html>
```
FILE: styles.css
```css
* { box-sizing: border-box; }
body { margin: 0; height: 100vh; display: flex; flex-direction: column; overflow: hidden; position: relative; background: #444; color: #c8c8c8; font: 11px/16px "Open Sans", "Noto Sans", sans-serif; }
button, input, select { font: inherit; color: inherit; border: 0; padding: 0; margin: 0; background: none; min-width: 0; }
a { color: inherit; text-decoration: none; }
h2 { margin: 0; font: inherit; }
ul, menu { margin: 0; padding: 0; list-style: none; }
svg { display: block; flex: none; }
.defs { position: absolute; width: 0; height: 0; }
.menubar { display: flex; align-items: center; color: #c8c8c8; }
.grip { flex: none; background-image: radial-gradient(circle, #888 1px, transparent 1px); background-size: 3px 3px; }
.grip-v { width: 6px; align-self: stretch; margin: 0 4px 0 3px; }
.grip-h { height: 6px; margin: 2px 3px 4px; }

.btn { background: #5d5d5d; color: #eee; height: 100%; text-align: center; white-space: nowrap; flex: none; }
.field { background: #2b2b2b; border-radius: 2px; color: #ddd; height: 18px; padding: 0 5px; flex: none; }
.tight { padding: 0 4px; }

/* Shelf */
.shelf { flex: none; height: 41px; border-bottom: 3px solid #383838; display: flex; }
.gear { width: 20px; height: 36px; background: #2f2f2f; display: grid; place-items: center; padding-top: 4px; margin-left: 1px; }
.shelf-items { display: flex; height: 28px; margin-left: 7px; }
.shelf-items button { width: 35px; display: flex; flex-direction: column; align-items: center; justify-content: center; white-space: nowrap; }
.cy { color: #56b6d6; font: 20px/24px "Open Sans", sans-serif; }
.qp { font: bold 20px/24px "Roboto", sans-serif; }
.shelf-items .deluxe { width: 32px; height: 29px; margin: 0 1px 0 2px; background: linear-gradient(#333, #666); border: 1px solid #000; }
.deluxe b { font: bold 14px/14px "DejaVu Sans Mono", monospace; color: #d9f1ff; }
.deluxe i { font: bold 8px/11px "DejaVu Sans Mono", monospace; color: #f6a821; }
.exp b { font: 15px/18px "Roboto", sans-serif; color: #e4e4e4; }
.exp i { font: bold 8px/10px "Open Sans", sans-serif; color: #111; }
.exp.multi b { font-size: 8px; line-height: 9px; color: #999; text-align: left; }
.nsuv span { font: 9px/10px "Open Sans", sans-serif; color: #ddd; }

/* Main area */
.main { flex: 1; min-height: 0; display: flex; gap: 4px; background: #3b3b3b; }
.toolbox { width: 44px; flex: none; background: #444; display: flex; flex-direction: column; }
.tool { width: 36px; height: 36px; margin: 0 4px 1px; display: grid; place-items: center; flex: none; }
.tool.on { background: #5285a6; border-radius: 2px; }
.toolbox hr { width: 36px; height: 2px; border: 0; background: #999; margin: 78px 4px 9px; flex: none; }
.layouts { display: grid; gap: 9px; justify-content: center; margin-bottom: 5px; }
.layouts button { height: 28px; }
.logo { margin: auto 6px 7px; }

.outliner { width: 319px; flex: none; display: flex; flex-direction: column; padding-top: 2px; }
.tab { align-self: flex-start; background: #444; color: #eee; padding: 1px 11px 0 10px; height: 17px; border-radius: 2px 2px 0 0; }
.out-panel { flex: 1; min-height: 0; background: #444; display: flex; flex-direction: column; padding: 0 4px 0 2px; }
.out-menu { height: 23px; gap: 15px; padding-left: 7px; }
.search-row { display: flex; align-items: center; gap: 7px; padding: 2px 1px 2px 4px; height: 22px; margin-bottom: 1px; }
.search { flex: 1; display: flex; align-items: center; background: #2b2b2b; border-radius: 2px; padding: 0 4px; height: 18px; }
.search input { flex: 1; outline: 0; }
.search input::placeholder { color: #888; opacity: 1; }
.tree-wrap { flex: 1; min-height: 0; display: flex; }
.tree { flex: 1; background: #2b2b2b; overflow: hidden; margin-right: 1px; }
.tree li { height: 20px; display: flex; align-items: center; gap: 2px; padding-left: 33px; }
.tree svg { width: 20px; }
.dim { color: #6e6e6e; }
.tree .sel { background: #5285a6; color: #fff; }
.vbar, .hbar { display: flex; align-items: center; gap: 4px; }
.vbar { flex-direction: column; width: 11px; padding: 3px 0; background: #2f2f2f; }
.hbar { height: 12px; padding: 0 18px 0 3px; }
.vbar span { flex: 1; width: 10px; background: #5d5d5d; border-radius: 5px; }
.hbar span { flex: 1; height: 10px; background: #5d5d5d; border-radius: 5px; }
.hbar i, .vbar i { border: 5px solid transparent; }
.vbar .au { border-top: 0; border-bottom-color: #bbb; }
.vbar .ad { border-bottom: 0; border-top-color: #bbb; }
.hbar .al { border-left: 0; border-right-color: #bbb; }
.hbar .ar { border-right: 0; border-left-color: #bbb; }
.dots { height: 9px; width: 104px; align-self: center; background: repeating-linear-gradient(90deg, #888 0 1px, transparent 1px 3px) 0 2px / 100% 1px no-repeat; }

/* Viewport */
.viewport { flex: 1; min-width: 0; margin: 3px 1px 4px; border: 1px solid #8a8a8a; background: #5c5c5c; position: relative; display: flex; flex-direction: column; }
.scene { position: absolute; inset: 0; width: 100%; height: 100%; }
.axis { font: bold 11px "Liberation Sans", sans-serif; }
.vp-head { background: #444; height: 39px; position: relative; }
.vp-menu { gap: 15px; padding-left: 8px; height: 18px; }
.vp-tools { display: flex; align-items: center; height: 20px; }
.s { width: 11px; height: 15px; flex: none; background: linear-gradient(#999, #999) 4px 0 / 2px 100% no-repeat; }
.vp-tools button { width: 20px; height: 20px; display: grid; place-items: center; flex: none; }
.vp-tools .act { background: #5285a6; border-radius: 2px; }
.dk { border: 1px solid #333; border-radius: 3px; background: #404040; }
.hud { position: relative; border-collapse: collapse; margin: -2px 0 0 15px; width: 246px; table-layout: fixed; font: bold 11px/20px "Liberation Sans", sans-serif; color: #fff; }
.hud th, .hud td { padding: 0; font-weight: bold; text-align: right; height: 20px; width: 65px; }
.hud th { text-align: left; width: 51px; }
.cam-name { position: relative; margin-top: auto; text-align: center; color: #fff; font: bold 11px/16px "Open Sans", sans-serif; padding: 0 16px 4px 0; }

/* Timeline and range */
.foot { flex: none; }
.timeline { height: 37px; border-top: 3px solid #383838; display: flex; align-items: center; padding-bottom: 2px; }
.track { flex: 1; height: 28px; background: #2b2b2b; display: flex; position: relative; color: #888; overflow: hidden; }
.now { flex: none; width: 11px; margin: 0 42px 0 9px; background: #555; color: #fff; padding: 12px 0 0 1px; }
.tick { flex: 1; background: linear-gradient(#888, #888) 0 100% / 2px 15px no-repeat; padding-left: 2px; line-height: 11px; }
.tick.last { flex: 0 0 21px; }
.frame { width: 68px; margin: 2px 7px 0; }
.playback { display: flex; width: 184px; margin-right: 9px; }
.playback button { flex: 1; display: grid; place-items: center; }
.flip svg { transform: rotate(180deg); }
.range { height: 35px; border-top: 2px solid #383838; display: flex; align-items: center; gap: 8px; padding-right: 10px; }
.range .grip { margin-right: -3px; }
.range .field { width: 68px; height: 23px; }
.range-track { flex: 1; height: 23px; background: #383838; padding: 2px 7px; }
.range-bar { width: 61%; height: 18px; background: #5d5d5d; border-radius: 3px; display: flex; align-items: center; gap: 4px; padding: 0 4px; }
.range-bar i { width: 13px; height: 13px; border-radius: 4px; background: #949494; }
.range-bar .end { margin-left: auto; }
.pick { appearance: none; width: 101px; height: 24px; border: 1px solid #555; border-radius: 2px; padding-left: 5px; white-space: nowrap; }
.dd { margin-left: -3px; }
.fi { width: 20px; display: grid; place-items: center; margin-left: 2px; }
.strip { height: 5px; border-top: 2px solid #383838; }

/* Marking menu */
.mk { position: absolute; height: 21px; background: #525252; border: 1px solid #000; color: #eee; white-space: nowrap; }
.mk i { display: inline-block; border: 4px solid transparent; border-left-color: #eee; border-right: 0; margin: 0 0 1px 13px; }
.edge { left: 664px; top: 137px; width: 79px; }
.nav { left: 532px; top: 163px; width: 133px; padding-left: 18px; }
.obj { left: 742px; top: 163px; width: 119px; }
.vert { left: 564px; top: 192px; width: 85px; }
.uvm { left: 758px; top: 192px; width: 67px; padding-left: 16px; }
.vface { left: 554px; top: 221px; width: 111px; }
.mult { left: 742px; top: 221px; width: 79px; }
.face { left: 666px; top: 247px; width: 75px; }
.hub { position: absolute; left: 697px; top: 196px; width: 13px; height: 13px; border: 1px solid #000; border-radius: 50%; background: #7b7b7b; }

/* Context menu */
.ctx { position: absolute; left: 611px; top: 289px; width: 185px; background: #525252; border: 1px solid #000; color: #eee; }
.ctx li { position: relative; height: 20px; line-height: 20px; padding-left: 25px; white-space: nowrap; }
.ctx .sep { height: 25px; padding-top: 5px; background: linear-gradient(#707070, #707070) 0 1px / 100% 1px no-repeat; }
.ctx .hot { background: linear-gradient(#5285a6, #5285a6) 0 5px / 100% 18px no-repeat; }
.sub::after { content: ""; position: absolute; right: 9px; bottom: 8px; border: 4px solid transparent; border-left-color: #eee; border-right: 0; }
.box::after { content: ""; position: absolute; right: 5px; bottom: 5px; width: 11px; height: 11px; border: 1px solid #bbb; }
.bl, .br { position: absolute; top: 0; left: 0; }
.br { left: auto; right: 0; transform: scaleX(-1); }
.callout { position: absolute; left: 605px; top: 697px; width: 195px; height: 36px; border: 10px solid #f00; }

/* Windows */
.win { position: absolute; background: #444; border: 1px solid #333; box-shadow: 2px 3px 9px rgba(0, 0, 0, .45); display: flex; flex-direction: column; }
.title { background: #fff; height: 30px; display: flex; align-items: center; padding-left: 8px; flex: none; color: #888; }
.title h2 { flex: 1; padding-left: 5px; }
.title button { width: 46px; height: 30px; display: grid; place-items: center; }
.setwin { left: 64px; top: 401px; width: 258px; height: 294px; }
.set-menu { height: 21px; gap: 16px; padding-left: 9px; flex: none; }
.set-body { flex: 1; min-height: 0; display: flex; padding: 5px 5px 6px 4px; gap: 6px; border-bottom: 1px solid #2b2b2b; margin: 0 2px; }
.set-list { flex: 1; background: #2b2b2b; border: 1px solid #333; border-radius: 2px; padding: 2px; line-height: 13px; }
.set-btns { width: 80px; height: 156px; display: flex; flex-direction: column; background: #5d5d5d; }
.set-btns .btn { flex: 1; border-bottom: 1px solid #595959; }
.set-foot { height: 38px; flex: none; display: flex; gap: 5px; padding: 6px; }
.set-foot .btn { flex: 1; }

.deluxe-win { left: 1024px; right: 4px; top: 20px; border-width: 0 1px 1px 0; border-color: #6a6a6a; }
.dx { display: flex; padding: 3px 0 0 2px; }
.dx-side { width: 220px; flex: none; padding-bottom: 1px; }
.sec { width: 100%; height: 20px; display: flex; align-items: center; gap: 10px; padding: 1px 0 0 6px; background: #5a5a5a; border-radius: 2px; font-weight: bold; color: #bdbdbd; }
.sec svg { margin-bottom: 4px; }
.shut { margin-bottom: 2px; }
.shut svg { transform: rotate(-90deg); }
.shut.last { margin-bottom: 0; }
.body { padding: 3px 4px 3px 2px; }
.flat { padding-top: 0; }
.row { display: flex; align-items: center; white-space: nowrap; }
.r17 { height: 17px; } .r18 { height: 18px; } .r19 { height: 19px; } .r20 { height: 20px; } .r23 { height: 23px; }
.flat .r17 { height: 16px; }
.g2 { gap: 2px; } .g3 { gap: 3px; }
.mt2 { margin-top: 2px; }
.grow, .eq { flex: 1; }
.w25 { width: 25px; } .w27 { width: 27px; } .w31 { width: 31px; } .w33 { width: 33px; } .w35 { width: 35px; } .w37 { width: 37px; } .w40 { width: 40px; } .w42 { width: 42px; } .w43 { width: 43px; } .w47 { width: 47px; } .w48 { width: 48px; } .w50 { width: 50px; } .w62 { width: 62px; } .w65 { width: 65px; } .w68 { width: 68px; } .w82 { width: 82px; } .w104 { width: 104px; } .w105 { width: 105px; } .w108 { width: 108px; }
.clip { flex: 1; overflow: hidden; }
.w82.clip { flex: none; }
.mid, .cl { display: flex; justify-content: center; }
.cl { justify-content: flex-end; }
.over { overflow: hidden; margin-right: -4px; }
.smart { margin-top: 11px; }
.off { color: #888; }
.gone { background: #484848; color: #777; }
.field.gone { background: #404040; }
.btn.gone { background: #4b4b4b; color: #888; height: 18px; }
.red { background: #cf5b4d; color: #111; }
.green { background: #6dc04b; color: #111; }
.gold { background: #cfa83c; color: #111; }
.ck { gap: 5px; margin-left: -1px; }
.ck input { appearance: none; flex: none; width: 13px; height: 13px; background: #2b2b2b; border-radius: 1px; }
.ck input:checked { display: grid; place-items: center; }
.ck input:checked::before { content: ""; width: 5px; height: 9px; border: solid #ddd; border-width: 0 2px 2px 0; transform: rotate(40deg); margin-top: -2px; }
.rd { display: flex; align-items: center; gap: 8px; padding-left: 2px; }
.rd input { appearance: none; flex: none; width: 9px; height: 9px; border-radius: 50%; background: #2b2b2b; }
.rd input:checked { background: #ddd; border: 2px solid #2b2b2b; }
input[type=range] { appearance: none; height: 13px; background: linear-gradient(#2b2b2b, #2b2b2b) 0 50% / 100% 4px no-repeat; flex-shrink: 0; }
input[type=range].grow { flex: 1; }
input[type=range]::-webkit-slider-thumb { appearance: none; width: 7px; height: 13px; background: #bdbdbd; border-radius: 1px; }
.split { width: 9px; flex: none; margin: 238px 0 240px; background: repeating-linear-gradient(#888 0 1px, transparent 1px 3px) 4px 0 / 1px 100% no-repeat; }
.dx-main { flex: 1; min-width: 0; display: flex; flex-direction: column; }
.uv-menu { gap: 16px; padding-left: 8px; height: 16px; }
.uv-tools { display: flex; height: 51px; margin: 3px 0 10px; overflow: hidden; }
.uv-tools .s { width: 10px; height: 51px; background: linear-gradient(#999, #999) 3px 50% / 3px 9px no-repeat, linear-gradient(#888, #888) 4px 0 / 1px 100% no-repeat; }
.uv-tools .plain { background: linear-gradient(#888, #888) 4px 0 / 1px 100% no-repeat; }
.grp { display: grid; grid-template-columns: repeat(2, 25px); grid-auto-rows: 25px; flex: none; }
.c5 { grid-template-columns: repeat(5, 25px); }
.grp button { display: grid; place-items: center; }
.grp svg { width: 20px; height: 20px; }
.grp .big svg { width: 25px; height: 25px; }
.grp .act { background: #5285a6; border-radius: 2px; margin: 1px 0; }
.check span { width: 15px; height: 15px; background: repeating-conic-gradient(#5ab58c 0 25%, #333 0 50%) 0 0 / 4px 4px; }
.rgb { font: bold 7px/14px "Open Sans", sans-serif; color: #5ab58c; background: #3a3a3a; width: 16px; }
.onb span { width: 15px; height: 15px; border: 1px solid #123; border-radius: 50%; background: #49b7c9; color: #123; font: bold 6px/13px "Open Sans", sans-serif; }
.cutoff { flex: 1; min-width: 0; overflow: hidden; display: flex; flex-direction: column; gap: 5px; padding: 3px 1px 2px 0; }
.cutoff .field { margin-left: 2px; width: 40px; }
.cutoff .btn { flex: 1; text-align: left; padding-left: 3px; }
.uv-canvas { flex: 1; background: #5c5c5c; display: grid; place-items: center; margin-right: 1px; padding-top: 48px; }
.uv-canvas .uv { margin-left: -19px; }
.tiny { font: 9px "Liberation Mono", monospace; fill: #858585; }
```
